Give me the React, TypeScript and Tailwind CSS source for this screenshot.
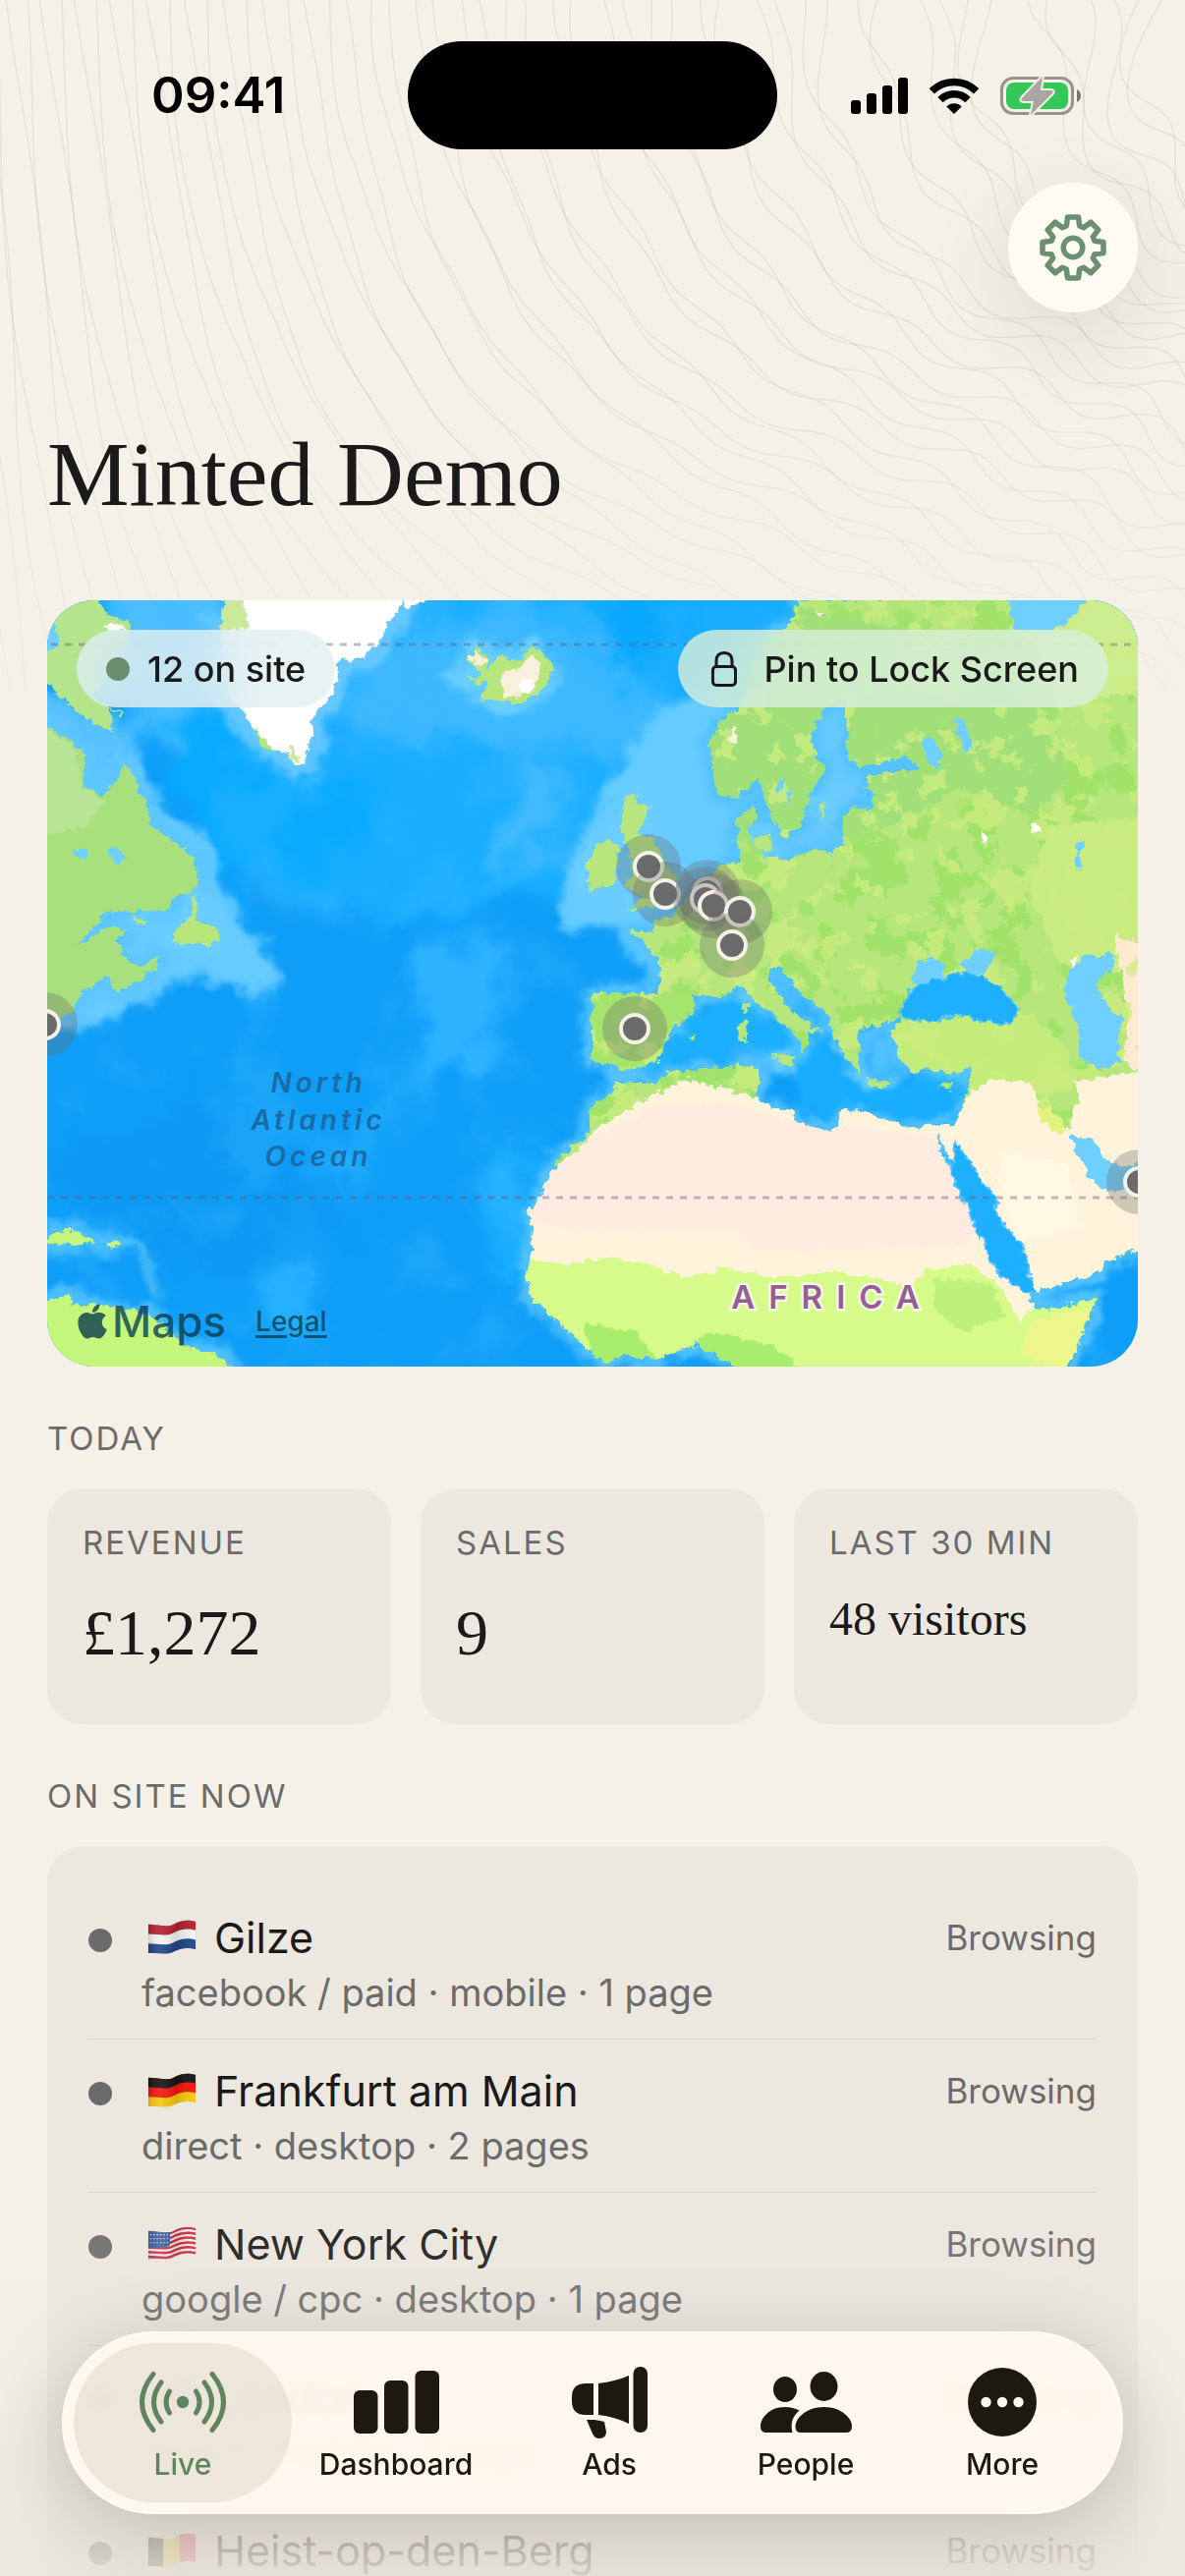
import { FaApple } from "react-icons/fa";
import { ReactNode } from "react";

type Country = "nl" | "de" | "us" | "gb" | "be";

interface Visitor {
  country: Country;
  city: string;
  details: string;
  status: string;
}

interface StatCardProps {
  label: string;
  value: string;
  small?: boolean;
}

interface TabProps {
  label: string;
  icon: ReactNode;
  active?: boolean;
}

const visitors: Visitor[] = [
  { country: "nl", city: "Gilze", details: "facebook / paid · mobile · 1 page", status: "Browsing" },
  { country: "de", city: "Frankfurt am Main", details: "direct · desktop · 2 pages", status: "Browsing" },
  { country: "us", city: "New York City", details: "google / cpc · desktop · 1 page", status: "Browsing" },
  { country: "gb", city: "London", details: "direct · mobile · 1 page", status: "Browsing" },
  { country: "be", city: "Heist-op-den-Berg", details: "direct · mobile · 1 page", status: "Browsing" },
];

const pins = [
  [612, 271],
  [629, 299],
  [672, 297],
  [670, 304],
  [678, 311],
  [705, 317],
  [697, 351],
  [598, 436],
  [-2, 432],
  [1111, 592],
];

// Contour lines: nearly vertical on the left, flatter and wavier to the right
const contourPath = (startX: number, phase: number) => {
  let x = startX;
  let y = -10;
  let d = `M${x} ${y}`;
  for (let i = 0; i < 220 && x < 1240 && y < 700; i++) {
    const reach = Math.min(1, (Math.max(0, x) / 1000) * (y / 340));
    const wave = Math.sin(x / 26 + y / 34 + phase) * 38 * Math.pow(Math.max(0, x) / 1206, 2);
    const drift = Math.sin(y / 90 + phase * 2) * 4;
    const angle = ((5 + 58 * reach + wave + drift) * Math.PI) / 180;
    x += Math.sin(angle) * 8;
    y += Math.cos(angle) * 8;
    d += `L${x.toFixed(1)} ${y.toFixed(1)}`;
  }
  return d;
};

const contours = Array.from({ length: 60 }, (_, i) =>
  contourPath(-90 + i * 15 + i * i * 0.14 + (i % 2) * 6, (i % 2) * 1.4 + i * 0.05)
);

const gearPath = (() => {
  const points: string[] = [];
  for (let i = 0; i < 8; i++) {
    [
      [-17, 23],
      [-10, 31.5],
      [10, 31.5],
      [17, 23],
    ].forEach(([offset, r]) => {
      const a = ((i * 45 + offset) * Math.PI) / 180;
      points.push(`${(Math.sin(a) * r).toFixed(1)} ${(-Math.cos(a) * r).toFixed(1)}`);
    });
  }
  return `M${points.join("L")}Z`;
})();

const eurasiaAfrica =
  "M765 0L757 26L733 39L716 80L702 111L682 126L674 146L678 176L682 196L698 202L718 186L722 177L729 199L737 219L749 242L767 231L775 199L793 172L777 149L781 126L793 109L812 99L814 112L814 159L828 171L860 162L876 159L888 171L836 179L832 192L842 197L838 217L824 209L812 219L810 249L797 259L785 252L757 264L729 261L714 236L720 222L718 209L702 222L706 266L682 272L670 289L650 306L635 322L617 327L619 339L593 337L611 352L625 372L621 401L563 399L555 402L554 449L555 471L577 472L583 481L607 475L623 466L635 436L658 421L658 402L686 404L708 391L722 409L745 427L767 447L769 461L776 447L773 437L789 441L757 419L735 386L737 374L749 374L763 396L797 422L799 442L813 466L828 484L826 472L828 459L824 436L852 431L868 424L860 441L868 469L884 481L894 476L919 482L941 474L939 492L931 519L925 532L907 534L884 536L852 529L824 517L805 521L803 536L795 541L765 531L759 521L735 516L718 504L725 492L723 474L670 476L631 482L619 492L581 491L577 499L555 516L552 536L546 551L520 566L505 599L487 627L494 636L493 666L487 684L493 709L520 736L566 776L591 769L619 772L662 757L678 766L710 785L1036 785L1054 746L1067 712L1010 723L999 712L1002 704L1034 696L1073 682L1077 672L1115 659L1115 -5Z";

const canada =
  "M-5 126L21 141L38 156L36 189L55 199L70 186L79 165L88 179L101 206L107 229L141 254L155 276L153 292L134 301L118 316L61 317L30 352L65 331L82 336L70 346L80 366L95 372L114 361L107 378L72 399L57 382L28 406L28 422L-5 428Z";

const baffin = "M-5 -5L49 -5L59 14L84 21L85 40L62 70L49 99L78 116L76 118L62 108L68 136L42 122L23 106L-5 80Z";

const greenland =
  "M199 -5L360 -5L357 12L346 26L338 42L323 57L310 61L298 60L294 89L283 104L268 122L269 136L264 159L262 167L252 167L245 156L225 152L206 126L199 109L185 96L176 31L204 31Z";

const islands = [
  "M428 61L436 47L447 56L447 72L459 56L482 61L493 47L505 56L514 67L512 82L497 96L472 106L440 99L449 86L428 79L444 76Z",
  "M550 261L563 246L580 246L581 262L577 287L552 297L550 286Z",
  "M587 202L599 194L600 207L614 209L605 229L597 239L617 242L625 256L631 272L642 282L641 296L631 309L589 316L605 302L587 292L597 279L591 249L583 236L587 219Z",
  "M149 299L155 309L151 326L172 331L176 342L166 351L126 349L134 332L145 322Z",
  "M84 321L103 329L90 328Z",
  "M704 429L713 429L710 449L703 449Z",
  "M708 412L713 410L711 424L707 422Z",
  "M739 464L761 462L759 474L746 470Z",
  "M832 488L858 491L856 496L836 494Z",
  "M907 495L920 490L917 499Z",
  "M652 444L660 443L657 449Z",
  "M720 242L736 238L738 252L724 256Z",
  "M786 208L792 204L788 226Z",
];

const caribbean = [
  "M-5 655L9 641L28 641L47 652L30 656Z",
  "M59 653L73 653L70 659L60 658Z",
  "M-5 716L23 707L25 719L49 716L84 722L107 729L130 749L145 762L172 766L191 785L-5 785Z",
];

// Inland seas drawn on top of the continent
const inlandSeas = [
  "M905 545L921 573L925 551L931 560L949 587L965 607L967 627L993 655L1004 704L996 706L965 681L946 639L932 609Z",
  "M868 416L875 402L890 390L910 384L927 380L953 382L969 394L990 417L979 431L955 429L927 421L900 429L872 426Z",
];

const lightSeas = [
  "M878 392L888 368L901 362L914 372L912 384Z",
  "M928 368L951 356L967 357L955 379L938 380Z",
  "M1058 362L1085 359L1087 372L1066 389L1081 416L1095 422L1089 449L1093 472L1073 477L1050 466L1050 436L1034 396L1040 376Z",
  "M1042 546L1062 546L1073 566L1093 577L1115 572L1115 582L1101 599L1077 602L1062 589L1046 559Z",
  "M976 -5L1060 -5L1040 22L1015 34L984 30Z",
  "M890 142L900 138L912 158L906 170L896 168Z",
  "M924 118L934 124L942 150L934 154L926 138Z",
  "M742 184L751 180L750 190L742 196Z",
  "M752 194L759 192L755 206Z",
  "M1048 246L1056 242L1052 260L1050 276L1046 262Z",
  "M60 252L72 252L82 264L70 270Z",
  "M28 254L40 252L42 262L32 264Z",
  "M-5 18L10 26L12 46L-5 54Z",
];

const MapArtwork = () => (
  <svg
    viewBox="0 0 1110 780"
    preserveAspectRatio="xMidYMid slice"
    className="absolute inset-0 w-full h-full"
    role="img"
    aria-label="Map of visitors around the North Atlantic"
  >
    <defs>
      <filter id="coast" x="-5%" y="-5%" width="110%" height="110%" colorInterpolationFilters="sRGB">
        <feTurbulence type="fractalNoise" baseFrequency="0.12" numOctaves="3" seed="4" />
        <feDisplacementMap in="SourceGraphic" scale="11" xChannelSelector="R" yChannelSelector="G" />
      </filter>
      <filter id="soft" x="-20%" y="-20%" width="140%" height="140%" colorInterpolationFilters="sRGB">
        <feGaussianBlur stdDeviation="12" result="b" />
        <feTurbulence type="fractalNoise" baseFrequency="0.02" numOctaves="4" seed="9" result="n" />
        <feDisplacementMap in="b" in2="n" scale="70" xChannelSelector="R" yChannelSelector="G" />
      </filter>
      <filter id="shelf" x="-5%" y="-5%" width="110%" height="110%" colorInterpolationFilters="sRGB">
        <feGaussianBlur stdDeviation="5" result="b" />
        <feTurbulence type="fractalNoise" baseFrequency="0.04" numOctaves="3" seed="2" result="n" />
        <feDisplacementMap in="b" in2="n" scale="24" xChannelSelector="R" yChannelSelector="G" />
      </filter>
      <filter id="patches" x="0" y="0" width="100%" height="100%" colorInterpolationFilters="sRGB">
        <feTurbulence type="fractalNoise" baseFrequency="0.03" numOctaves="4" seed="12" />
        <feColorMatrix values="0 0 0 0 .8  0 0 0 0 .93  0 0 0 0 .5  24 0 0 0 -13.8" />
      </filter>
      <filter id="woods" x="0" y="0" width="100%" height="100%" colorInterpolationFilters="sRGB">
        <feTurbulence type="fractalNoise" baseFrequency="0.03" numOctaves="4" seed="31" />
        <feColorMatrix values="0 0 0 0 .61  0 0 0 0 .89  0 0 0 0 .4  24 0 0 0 -13" />
      </filter>
      <filter id="ridges" x="0" y="0" width="100%" height="100%" colorInterpolationFilters="sRGB">
        <feTurbulence type="fractalNoise" baseFrequency="0.012" numOctaves="5" seed="21" />
        <feColorMatrix values="0 0 0 0 .24  0 0 0 0 .73  0 0 0 0 1  5 0 0 0 -2.6" />
      </filter>
      <clipPath id="landClip">
        <path d={eurasiaAfrica} />
      </clipPath>
    </defs>

    {/* Ocean */}
    <rect width="1110" height="780" fill="#0e9ef8" />
    <g filter="url(#soft)">
      <path d="M-40 -40H1150V150L640 260L560 330L500 300L330 330L200 300L120 120L-40 60Z" fill="#18adff" />
      <path d="M70 -40H190V110L120 160L70 90Z" fill="#4bbeff" />
      <path d="M350 20L480 0L640 60L600 160L480 150L380 140L300 130Z" fill="#3db9ff" />
      <path d="M480 150L540 200L490 270L440 300L470 200Z" fill="#42bbff" />
      <path d="M560 -20H640V100L560 60Z" fill="#08a8fd" />
      <path d="M120 110L180 120L230 200L320 180L330 240L200 290L140 220Z" fill="#08abff" />
      <path d="M390 340L460 330L460 470L370 480Z" fill="#2fb3ff" />
      <path d="M360 480L400 480L300 600L240 700L220 660Z" fill="#1fabfc" />
      <path d="M230 620L270 640L260 770L220 720Z" fill="#28b2ff" />
      <path d="M440 560L500 540L490 700L450 660Z" fill="#1cb0ff" />
      <path d="M0 560L170 500L330 640L200 690L60 640Z" fill="#0b97f2" opacity=".7" />
    </g>
    <rect width="1110" height="780" filter="url(#ridges)" opacity=".3" />

    {/* Continental shelves */}
    <g filter="url(#shelf)">
      <path d="M620 110L690 90L720 190L700 280L640 330L620 390L580 340L520 330L530 270L570 190Z" fill="#66cbff" />
      <path d="M700 190L820 90L900 170L850 220L800 265L720 260Z" fill="#68caff" />
      <path d="M90 190L160 240L190 320L230 360L240 395L200 400L150 380L60 430L30 440L30 340L110 310Z" fill="#66cbff" />
      <path d="M-10 90L70 120L90 170L50 200L-10 130Z" fill="#55c1ff" />
      <path d={eurasiaAfrica} fill="none" stroke="#55c3ff" strokeWidth="16" />
      <path d={canada} fill="none" stroke="#5fc7ff" strokeWidth="26" />
      <path d={greenland} fill="none" stroke="#66c8ff" strokeWidth="28" />
      {islands.map((d) => (
        <path key={d} d={d} fill="#6bceff" stroke="#6bceff" strokeWidth="18" />
      ))}
      {caribbean.map((d) => (
        <path key={d} d={d} fill="none" stroke="#4fbfff" strokeWidth="18" />
      ))}
      <path d="M80 655Q112 670 110 710" fill="none" stroke="#6fd0ff" strokeWidth="6" />
    </g>
    <g filter="url(#shelf)">
      <path d="M650 430L700 400L720 420L765 450L730 458L640 470L600 484Z" fill="#1bb0ff" />
      <path d="M765 460L785 445L830 495L930 485L925 525L880 530L820 512L795 530L760 510Z" fill="#18adff" />
      <path d="M830 440L860 440L866 480L840 482Z" fill="#4fc2ff" />
    </g>

    {/* Land */}
    <g filter="url(#coast)">
      <g fill="#b7e77c">
        <path d={eurasiaAfrica} />
        <path d={canada} fill="#a7e07c" />
        <path d={baffin} fill="#b4e58c" />
        {islands.map((d) => (
          <path key={d} d={d} />
        ))}
        {caribbean.map((d) => (
          <path key={d} d={d} fill="#c3f67a" />
        ))}
      </g>
      <path d="M-5 130L30 150L34 190L60 204L40 230L-5 240Z" fill="#b8e696" />
      <g clipPath="url(#landClip)">
        <rect width="1110" height="780" filter="url(#woods)" opacity=".8" />
        <path d="M690 -10L1010 60L1040 180L1000 220L930 190L860 230L820 240L720 260L670 200Z" fill="#a1df78" />
        <path d="M980 0L1115 -10L1115 90L1030 110L1000 50Z" fill="#cdee90" />
        <path d="M1020 230L1115 220L1115 380L1030 370L1000 300Z" fill="#c8ec80" />
        <path d="M550 400L660 400L640 470L555 478Z" fill="#a5e46c" />
        <path d="M860 430L1000 420L1040 460L1040 500L930 500L860 480Z" fill="#c3ec7a" />
        <path d="M1085 340L1115 350V480L1096 470L1100 420Z" fill="#ffe9d0" />
        <rect width="1110" height="780" filter="url(#patches)" opacity=".8" />
      </g>
      <g clipPath="url(#landClip)">
        <path d="M480 650L1115 650V790H480Z" fill="#d6fb8b" />
        <path
          d="M480 670L480 600L546 556L560 536L605 510L650 487L690 497L720 508L760 500L925 525L940 500L960 487L1000 490L1012 520L1040 536L1050 510L1046 490L1115 478V690L1040 700L1010 706L990 736L972 700L940 676L895 680L880 696L800 684L740 690L690 680L650 690L610 676L570 668L530 676Z"
          fill="#fff3dc"
        />
        <path d="M480 630L510 580L560 545L620 515L690 512L760 530L900 545L930 580L950 640L930 655L800 662L720 660L700 640L540 640Z" fill="#ffebe0" />
        <path d="M970 560L1040 575L1050 640L990 650L968 600Z" fill="#fff8e2" />
        <path d="M1005 520L1020 515L1038 538L1030 545Z" fill="#e2f27c" />
        <path d="M545 735L600 745L620 772L560 790Z" fill="#a8ee6c" />
        <path d="M660 752L690 745L740 760L780 790L680 790Z" fill="#a8ee6c" />
        <path d="M905 690L960 695L975 730L930 745L900 720Z" fill="#bdf07c" />
        <path d="M1000 735L1070 715L1040 785L990 770Z" fill="#edf68a" />
      </g>
      <path d="M180 -5L199 -5L204 31L176 31Z" fill="#cbe99a" />
      <path d={greenland} fill="#ffffff" />
      <path d="M359 -5L398 -5L366 10Z" fill="#ffffff" />
      <path d="M208 128L216 136L232 152L222 153Z" fill="#b4e77a" />
      <path d="M244 148L252 148L256 164L248 160Z" fill="#cbe99a" />
      <path d="M462 74L480 70L492 56L504 64L500 78L486 96L466 100Z" fill="#f8f0dc" />
      <path d="M430 60L436 50L446 60L440 68Z" fill="#f8f0dc" />
      <path d="M478 84L496 80L498 90L484 96Z" fill="#ffffff" />
      <path d="M58 24L74 24L82 30L66 32Z" fill="#ffffff" />
      <path d="M696 128L704 138L702 148L692 142Z" fill="#fbf3e0" />
      <path d="M780 8L790 12L788 18Z" fill="#fbf3e0" />
      <path d="M950 234L957 240L953 248Z" fill="#ffffff" />
      <path d="M1000 226L1012 234L1004 236Z" fill="#ffffff" />
      <path d="M1040 366L1050 362L1044 376Z" fill="#fdf6e6" />
      {inlandSeas.map((d) => (
        <path key={d} d={d} fill="#1eb0ff" stroke="#55c3ff" strokeWidth="2" />
      ))}
      {lightSeas.map((d) => (
        <path key={d} d={d} fill="#6fcfff" />
      ))}
    </g>

    {/* Arctic circle and tropic */}
    <g stroke="#5b5b78" strokeOpacity=".4" strokeWidth="3" strokeDasharray="7 7">
      <path d="M4 45H1110" />
      <path d="M0 608H1110" />
    </g>

    <g
      className="font-['Inter',sans-serif] italic font-semibold text-[28px] tracking-[4px]"
      fill="#1a6ba6"
      textAnchor="middle"
    >
      <text x="276" y="501">North</text>
      <text x="276" y="539">Atlantic</text>
      <text x="276" y="576">Ocean</text>
    </g>
    <text
      x="799"
      y="721"
      textAnchor="middle"
      fill="#965d96"
      stroke="#f3f8e4"
      strokeWidth="5"
      paintOrder="stroke"
      className="font-['Inter',sans-serif] font-semibold text-[33px] tracking-[14px]"
    >
      AFRICA
    </text>

    {pins.map(([x, y]) => (
      <g key={`${x}-${y}`}>
        <circle cx={x} cy={y} r="33" fill="#6b6b6b" fillOpacity=".32" />
        <circle cx={x} cy={y} r="14" fill="#6b6b6b" stroke="#f5f0e8" strokeWidth="4" />
      </g>
    ))}
  </svg>
);

const waveTop = "M0 5C12 5 20 9 28 4C36 0 42 0 50 2V31C42 29 36 29 28 33C20 38 12 34 0 35Z";

const Flag = ({ country }: { country: Country }) => (
  <svg viewBox="0 0 50 37" className="w-[50px] h-9 shrink-0" aria-hidden="true">
    <clipPath id={`flag-${country}`}>
      <path d={waveTop} />
    </clipPath>
    <linearGradient id={`sheen-${country}`}>
      <stop offset="0" stopColor="#000" stopOpacity=".15" />
      <stop offset=".25" stopColor="#fff" stopOpacity=".1" />
      <stop offset=".6" stopColor="#000" stopOpacity=".12" />
      <stop offset="1" stopColor="#fff" stopOpacity=".05" />
    </linearGradient>
    <g clipPath={`url(#flag-${country})`}>
      {country === "nl" && (
        <>
          <rect width="50" height="37" fill="#21468b" />
          <path d="M0 -9V25C12 25 20 28 28 23C36 19 42 19 50 21V-9Z" fill="#f4f4f4" />
          <path d="M0 -9V15C12 15 20 18 28 13C36 9 42 9 50 11V-9Z" fill="#b3202d" />
        </>
      )}
      {country === "de" && (
        <>
          <rect width="50" height="37" fill="#f6c80f" />
          <path d="M0 -9V25C12 25 20 28 28 23C36 19 42 19 50 21V-9Z" fill="#f5150c" />
          <path d="M0 -9V15C12 15 20 18 28 13C36 9 42 9 50 11V-9Z" fill="#151515" />
        </>
      )}
      {country === "us" && (
        <>
          <rect width="50" height="37" fill="#f6f1f1" />
          {[7, 12, 17, 22, 27, 32].map((y) => (
            <path
              key={y}
              d={`M0 ${y}C12 ${y} 20 ${y + 3} 28 ${y - 2}C36 ${y - 6} 42 ${y - 6} 50 ${y - 4}`}
              fill="none"
              stroke="#cf2338"
              strokeWidth="2.6"
            />
          ))}
          <path d="M0 0H23V20C14 24 8 22 0 22Z" fill="#33599b" />
          <path d="M2 9H22M2 13H22M2 17H22" stroke="#c4d0e6" strokeWidth="1.3" strokeDasharray="1.5 2" />
        </>
      )}
      {country === "gb" && (
        <>
          <rect width="50" height="37" fill="#2b3f88" />
          <path d="M0 3L50 33M50 3L0 33" stroke="#fff" strokeWidth="7" />
          <path d="M0 3L50 33M50 3L0 33" stroke="#d4213d" strokeWidth="3" />
          <path d="M25 0V37M0 19H50" stroke="#fff" strokeWidth="12" />
          <path d="M25 0V37M0 19H50" stroke="#d4213d" strokeWidth="8" />
        </>
      )}
      {country === "be" && (
        <>
          <rect width="17" height="37" fill="#151515" />
          <rect x="16" width="18" height="37" fill="#f7dc3b" />
          <rect x="33" width="17" height="37" fill="#e8364b" />
        </>
      )}
      <rect width="50" height="37" fill={`url(#sheen-${country})`} />
    </g>
  </svg>
);

const StatusBar = () => (
  <div className="grid grid-cols-[1fr_376px_1fr] items-center pt-[42px]">
    <span className="pl-[154px] text-[51px] leading-[60px] font-semibold text-black">09:41</span>
    <div className="h-[110px] rounded-full bg-black" />
    <div className="flex items-center justify-end gap-[22px] pr-[106px]">
      <svg viewBox="0 0 58 37" className="w-[58px] h-[37px]" aria-label="Signal">
        <rect x="0" y="23" width="10" height="14" rx="3" />
        <rect x="16" y="16" width="10" height="21" rx="3" />
        <rect x="32" y="8" width="10" height="29" rx="3" />
        <rect x="48" y="0" width="10" height="37" rx="3" />
      </svg>
      <svg viewBox="0 0 50 37" className="w-[50px] h-[37px]" aria-label="Wi-Fi">
        <path d="M2.4 13.8A32 32 0 0 1 47.6 13.8" fill="none" stroke="#000" strokeWidth="7.6" />
        <path d="M11 22.6A19.7 19.7 0 0 1 39 22.6" fill="none" stroke="#000" strokeWidth="7.4" />
        <path d="M25 37L17.3 29.4A11 11 0 0 1 32.7 29.4Z" />
      </svg>
      <svg viewBox="0 0 82 41" className="w-[82px] h-[41px]" aria-label="Battery charging">
        <rect x="1.5" y="2.5" width="72" height="36" rx="11.5" fill="none" stroke="#97938d" strokeWidth="3" />
        <rect x="6" y="7" width="63" height="27" rx="8" fill="#34c759" />
        <path d="M78 14Q82 16 82 20.500Q82 25 78 27Z" fill="#77746f" />
        <path
          d="M43 1L22 23Q20 26 24 26H34L31 40L53 18Q55 15 51 15H41Z"
          fill="#aaa69f"
          stroke="#f4f0e7"
          strokeWidth="4"
          strokeLinejoin="round"
          paintOrder="stroke"
        />
      </svg>
    </div>
  </div>
);

const StatCard = ({ label, value, small = false }: StatCardProps) => (
  <div className="rounded-[36px] bg-[#ece8e0] px-9 pt-[33px] pb-[43px]">
    <h3 className="text-[33px] leading-[44px] tracking-[2px] text-[#6b6b6b] whitespace-nowrap">{label}</h3>
    <p
      className={
        small
          ? "mt-5 font-['Liberation_Serif',serif] text-[48px] leading-[72px] text-[#1a1a1a] whitespace-nowrap"
          : "mt-5 font-['Liberation_Serif',serif] text-[66px] leading-[100px] text-[#1a1a1a]"
      }
    >
      {value}
    </p>
  </div>
);

const VisitorRow = ({ country, city, details, status }: Visitor) => (
  <li className="flex items-start border-b border-[#d8d4cc] pt-6 pb-[19px] last:border-b-0">
    <span className="mt-[19px] w-6 h-6 shrink-0 rounded-full bg-[#6b6b6b]" />
    <div className="ml-[30px] flex-1">
      <div className="flex items-center gap-[18px] pl-1.5">
        <Flag country={country} />
        <span className="text-[43px] leading-[56px] text-[#1a1a1a]">{city}</span>
      </div>
      <p className="text-[38px] leading-[56px] text-[#6b6b6b]">{details}</p>
    </div>
    <span className="text-[35px] leading-[56px] text-[#6b6b6b]">{status}</span>
  </li>
);

const Tab = ({ label, icon, active = false }: TabProps) => (
  <button
    type="button"
    aria-current={active ? "page" : undefined}
    className={
      active
        ? "flex flex-col items-center rounded-full bg-[#ddd6ca]/50 pt-[22px] pb-[21px] text-[#5f855f]"
        : "flex flex-col items-center rounded-full pt-[22px] pb-[21px] text-[#1e190f]"
    }
  >
    <span className="flex h-[76px] items-center justify-center">{icon}</span>
    <span className="mt-[7px] text-[30px] leading-9 font-medium">{label}</span>
  </button>
);

const LiveIcon = () => (
  <svg viewBox="-46 -34 92 68" className="w-[92px] h-[68px]">
    <g fill="none" stroke="currentColor" strokeWidth="5" strokeLinecap="round">
      <path d="M-30 -28.500Q-53 0 -30 28.500M30 -28.500Q53 0 30 28.500" />
      <path d="M-22 -20Q-37 0 -22 20M22 -20Q37 0 22 20" />
      <path d="M-13.500 -11Q-20.500 0 -13.500 11M13.500 -11Q20.500 0 13.500 11" />
    </g>
    <circle r="6.200" fill="currentColor" />
  </svg>
);

const DashboardIcon = () => (
  <svg viewBox="0 0 87 64" className="w-[87px] h-16" fill="currentColor">
    <rect x="0" y="20" width="24.500" height="44" rx="6" />
    <rect x="31" y="10" width="24.500" height="54" rx="6" />
    <rect x="62.500" y="0" width="24.500" height="64" rx="6" />
  </svg>
);

const AdsIcon = () => (
  <svg viewBox="0 0 77 73" className="w-[77px] h-[73px]" fill="currentColor">
    <path d="M22 17H14Q0 17 0 31V35Q0 49 14 49H22Z" />
    <path d="M27 17Q44 15 58 9V58Q44 51 27 49Z" />
    <rect x="62.500" y="0" width="14.500" height="67" rx="7" />
    <path d="M15 54H23Q29 55 33 56L35 66Q35 73 28 73Q23 73 21 68Z" />
  </svg>
);

const PeopleIcon = () => (
  <svg viewBox="0 0 93 62" className="w-[93px] h-[62px]" fill="currentColor">
    <ellipse cx="25" cy="18" rx="12" ry="13" />
    <ellipse cx="64.500" cy="15" rx="14" ry="15" />
    <path d="M6 62Q0 62 0 56C0 47 9 36 25 36Q33 36 39.500 39.500C33 45 30 52 32.500 62Z" />
    <path d="M41 62Q35.500 62 35.500 56C35.500 47 47 36 64.500 36C82 36 93 47 93 56Q93 62 87 62Z" />
  </svg>
);

const MoreIcon = () => (
  <svg viewBox="0 0 70 70" className="w-[70px] h-[70px]">
    <circle cx="35" cy="35" r="35" fill="currentColor" />
    <g fill="#fef9ee">
      <circle cx="18.500" cy="35" r="5.200" />
      <circle cx="35" cy="35" r="5.200" />
      <circle cx="51.500" cy="35" r="5.200" />
    </g>
  </svg>
);

const App = () => {
  return (
    <div className="relative h-screen overflow-hidden bg-[#f5f0e8] font-['Inter',sans-serif]">
      {/* Contour background */}
      <svg
        viewBox="0 0 1206 700"
        preserveAspectRatio="xMaxYMin slice"
        className="absolute inset-x-0 top-0 w-full h-[700px]"
        aria-hidden="true"
      >
        <linearGradient id="fade" x1="0" y1="0" x2="0" y2="1">
          <stop offset="0" stopColor="#fff" />
          <stop offset=".5" stopColor="#fff" />
          <stop offset="1" stopColor="#fff" stopOpacity=".2" />
        </linearGradient>
        <mask id="fadeMask">
          <rect width="1206" height="700" fill="url(#fade)" />
        </mask>
        <g mask="url(#fadeMask)" fill="none" stroke="#6b8e5b" strokeOpacity=".13" strokeWidth="1.400">
          {contours.map((d) => (
            <path key={d} d={d} />
          ))}
        </g>
      </svg>

      <div className="relative">
        <StatusBar />

        <main className="px-12">
          <header>
            <div className="flex justify-end pt-[34px]">
              <button
                type="button"
                aria-label="Settings"
                className="flex w-[132px] h-[132px] items-center justify-center rounded-full border-2 border-[#fffdf2] bg-[#fffaf2] text-[#6b8f71] shadow-[0_24px_90px_rgba(60,50,30,0.12)]"
              >
                <svg viewBox="-36 -36 72 72" className="w-[72px] h-[72px]" fill="none" stroke="currentColor" strokeWidth="5.500">
                  <path d={gearPath} strokeLinejoin="round" />
                  <circle r="9.800" />
                </svg>
              </button>
            </div>
            <h1 className="mt-[108px] font-['Liberation_Serif',serif] text-[94px] leading-[112px] text-[#1a1a1a]">
              Minted Demo
            </h1>
          </header>

          {/* Visitor map */}
          <section className="relative mt-[73px] flex h-[780px] flex-col justify-between overflow-hidden rounded-[48px] px-[30px] pt-[30px] pb-5">
            <MapArtwork />
            <div className="relative flex items-start justify-between">
              <div className="flex h-[79px] items-center gap-[18px] rounded-full bg-[#e2eff0]/80 px-[30px] backdrop-blur-xl">
                <span className="w-6 h-6 rounded-full bg-[#6b8f71]" />
                <span className="text-[36px] leading-[44px] font-medium text-[#1a1a1a]">12 on site</span>
              </div>
              <button
                type="button"
                className="flex h-[79px] items-center gap-7 rounded-full bg-[#d9efdc]/80 pl-[34px] pr-[30px] text-[#1a1a1a] backdrop-blur-xl"
              >
                <svg viewBox="0 0 26 36" className="w-[26px] h-9" fill="none" stroke="currentColor" strokeWidth="3">
                  <rect x="1.500" y="15.500" width="23" height="19" rx="3.500" />
                  <path d="M5 15V10Q5 1.500 13 1.500Q21 1.500 21 10V15" />
                </svg>
                <span className="text-[36px] leading-[44px] font-medium">Pin to Lock Screen</span>
              </button>
            </div>
            <div className="relative flex items-center gap-[30px] text-[#0a3c4e]/80">
              <div className="flex items-center gap-1">
                <FaApple className="w-8 h-10" />
                <span className="text-[44px] leading-[52px] font-medium">Maps</span>
              </div>
              <a href="#legal" className="text-[28px] leading-9 font-medium underline decoration-3 underline-offset-4">
                Legal
              </a>
            </div>
          </section>

          {/* Today */}
          <section className="mt-[51px]">
            <h2 className="mb-[29px] text-[33px] leading-[44px] tracking-[2px] text-[#6b6b6b]">TODAY</h2>
            <div className="grid grid-cols-3 gap-[30px]">
              <StatCard label="REVENUE" value="£1,272" />
              <StatCard label="SALES" value="9" />
              <StatCard label="LAST 30 MIN" value="48 visitors" small />
            </div>
          </section>

          {/* On site now */}
          <section className="mt-[51px]">
            <h2 className="mb-[29px] text-[33px] leading-[44px] tracking-[2px] text-[#6b6b6b]">ON SITE NOW</h2>
            <ul className="rounded-[36px] bg-[#ece8e0] px-[42px] py-[41px]">
              {visitors.map((visitor) => (
                <VisitorRow key={visitor.city} {...visitor} />
              ))}
            </ul>
          </section>
        </main>
      </div>

      {/* Fade behind the tab bar */}
      <div className="pointer-events-none absolute inset-x-0 bottom-0 h-[440px] bg-linear-to-b from-[#ebe6dd]/0 via-[#ebe6dd]/20 to-[#ebe6dd]/90" />

      <nav className="absolute inset-x-[63px] bottom-[63px] grid grid-cols-[222fr_212fr_222fr_178fr_222fr] rounded-full border-2 border-[#fffdf0] bg-[#fff9ee]/92 p-2.5 shadow-[0_16px_80px_rgba(60,50,40,0.24)] backdrop-blur-xs">
        <Tab label="Live" icon={<LiveIcon />} active />
        <Tab label="Dashboard" icon={<DashboardIcon />} />
        <Tab label="Ads" icon={<AdsIcon />} />
        <Tab label="People" icon={<PeopleIcon />} />
        <Tab label="More" icon={<MoreIcon />} />
      </nav>
    </div>
  );
};

export default App;
